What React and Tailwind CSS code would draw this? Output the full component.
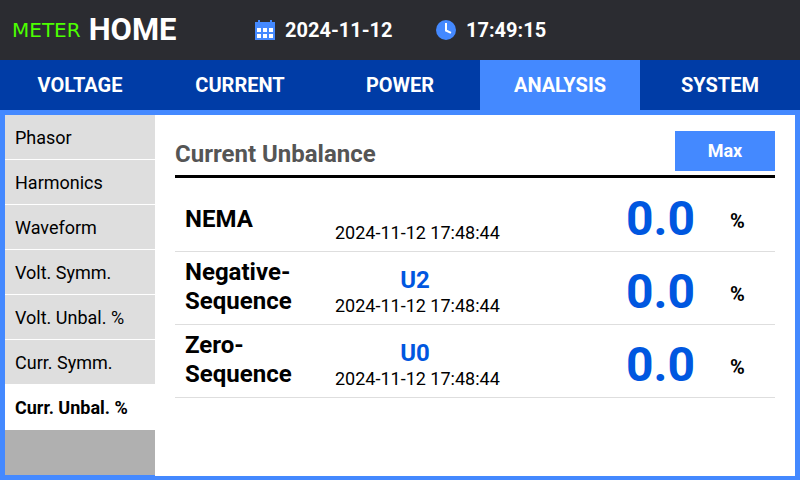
const TABS = ["VOLTAGE", "CURRENT", "POWER", "ANALYSIS", "SYSTEM"];
const MENU = ["Phasor", "Harmonics", "Waveform", "Volt. Symm.", "Volt. Unbal. %", "Curr. Symm.", "Curr. Unbal. %"];
const ROWS = [
  { name: ["NEMA"], symbol: "", value: "0.0" },
  { name: ["Negative-", "Sequence"], symbol: "U2", value: "0.0" },
  { name: ["Zero-", "Sequence"], symbol: "U0", value: "0.0" },
];

function CalendarIcon() {
  return (
    <svg width="20" height="20" viewBox="0 0 20 20" aria-hidden="true">
      <path fill="#4489ff" d="M0 2h3V0h2v2h10V0h2v2h3v18H0z" />
      <path fill="#fff" d="M2 8h4v4H2zM8 8h4v4H8zM14 8h4v4h-4zM2 14h4v4H2zM8 14h4v4H8zM14 14h4v4h-4z" />
    </svg>
  );
}

function ClockIcon() {
  return (
    <svg width="20" height="20" viewBox="0 0 20 20" aria-hidden="true">
      <circle cx="10" cy="10" r="10" fill="#4489ff" />
      <path d="M10 3v7.5l5 2.3" fill="none" stroke="#fff" strokeWidth="2" />
    </svg>
  );
}

export default function App() {
  return (
    <div className="flex h-screen flex-col bg-[#4489ff] font-['Roboto',sans-serif] text-black">
      <header className="flex h-[60px] shrink-0 items-center bg-[#2b2c31] pl-3 text-white">
        <div className="flex w-[243px] items-center gap-2">
          <span className="font-['DejaVu_Sans',sans-serif] text-[20px] text-[#4cff00]">METER</span>
          <h1 className="text-[31px] leading-9 font-bold">HOME</h1>
        </div>
        <div className="flex w-[181px] items-center gap-[10px] text-xl font-bold">
          <CalendarIcon />
          <span>2024-11-12</span>
        </div>
        <div className="flex items-center gap-[10px] text-xl font-bold">
          <ClockIcon />
          <span>17:49:15</span>
        </div>
      </header>
      <nav className="grid h-[50px] shrink-0 grid-cols-5 bg-[#003ca6]">
        {TABS.map((t) => (
          <button key={t} type="button" className={`text-xl font-bold text-white ${t === "ANALYSIS" ? "bg-[#4489ff]" : ""}`}>
            {t}
          </button>
        ))}
      </nav>
      <div className="flex grow px-[5px] pt-[5px] pb-1">
        <aside className="mb-px flex w-[150px] shrink-0 flex-col bg-[#b0b0b0]">
          {MENU.map((m) => (
            <button
              key={m}
              type="button"
              className={`h-[45px] border-b border-white pt-0.5 pl-[10px] text-left text-lg ${m === "Curr. Unbal. %" ? "bg-white font-bold" : "bg-[#dedede]"}`}
            >
              {m}
            </button>
          ))}
        </aside>
        <main className="grow bg-white px-5 pt-4">
          <div className="mb-px flex h-[47px] items-start justify-between border-b-3 border-black">
            <h2 className="pt-[7px] text-2xl font-bold text-[#555]">Current Unbalance</h2>
            <button type="button" className="h-10 w-[100px] bg-[#4489ff] text-lg font-bold text-white">Max</button>
          </div>
          <table className="w-full border-separate border-spacing-0">
            <tbody>
              {ROWS.map((r) => (
                <tr key={r.name.join("")} className="h-[73px] *:border-b *:border-[#dedede]">
                  <th scope="row" className={`w-[150px] pl-[10px] text-left text-2xl leading-[29px] font-bold ${r.name.length > 1 ? "pb-0.5" : "pt-2"}`}>
                    {r.name.map((n) => <div key={n}>{n}</div>)}
                  </th>
                  <td className="w-[180px] px-[10px] pt-[15px] align-top">
                    <div className="h-[26px] w-40 text-center text-2xl leading-[26px] font-bold text-[#0057e0]">{r.symbol}</div>
                    <div className="w-40 text-lg leading-[26px] whitespace-nowrap">2024-11-12 17:48:44</div>
                  </td>
                  <td className="pt-2 text-right text-5xl font-bold text-[#0057e0]">{r.value}</td>
                  <td className="w-20 pt-[11px] pl-[35px] text-xl font-bold">%</td>
                </tr>
              ))}
            </tbody>
          </table>
        </main>
      </div>
    </div>
  );
}
